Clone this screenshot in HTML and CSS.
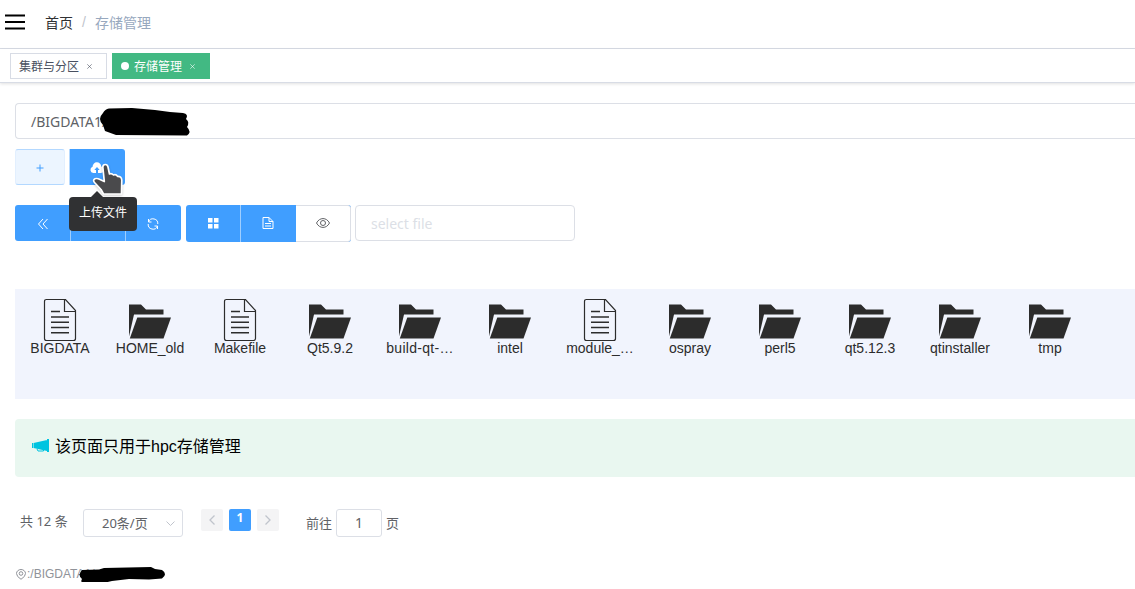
FILE: index.html
```html
<!DOCTYPE html>
<html lang="zh">
<head>
<meta charset="utf-8">
<title>存储管理</title>
<link rel="stylesheet" href="styles.css">
</head>
<body>
<svg class="defs" width="0" height="0">
  <symbol id="file" viewBox="0 0 34 44">
    <path d="M3.5 1.5H22.500L32.500 12.500V40.500Q32.500 42.500 30.500 42.500H3.500Q1.500 42.500 1.500 40.500V3.500Q1.500 1.500 3.500 1.500ZM21.500 1.500V13.500H32.500" fill="none" stroke="#2c2c2c" stroke-width="1.2"/>
    <path d="M8 13.500H17M8 19H26M8 24.300H26M8 29.500H26M8 34.800H26" stroke="#2c2c2c" stroke-width="1.500"/>
  </symbol>
  <symbol id="folder" viewBox="0 0 42 36">
    <path d="M0 1.500H12L17 6.500H34.500V11.500H5L0 33.500Z" fill="#2c2c2c"/>
    <path d="M8.300 14.500H42L34.500 35.500H.8Z" fill="#2c2c2c"/>
  </symbol>
</svg>
<header class="navbar">
  <svg class="burger" width="20" height="16" viewBox="0 0 20 16"><path d="M0 1.500H20M0 8H20M0 14.500H20" stroke="#000" stroke-width="2"/></svg>
  <span class="home">首页</span><span class="slash">/</span><span class="current">存储管理</span>
</header>
<nav class="tags">
  <span class="tag">集群与分区<svg class="close" viewBox="0 0 5 5"><path d="M.3.3 4.700 4.700M4.700.3.3 4.700"/></svg></span>
  <span class="tag active"><i class="dot"></i>存储管理<svg class="close" viewBox="0 0 5 5"><path d="M.3.3 4.700 4.700M4.700.3.3 4.700"/></svg></span>
</nav>
<main class="content">
  <div class="path-input"><span>/BIGDATA1/</span>
    <svg class="scribble" width="92" height="30" viewBox="0 0 92 30"><path d="M3 5Q5 1 9 .5L32 0 55 2 70 4 83 5Q89 6 86 11Q90 14 87 19Q92 24 87 27.500L16 27 5 23 3 17Q-3 11 3 5Z"/></svg>
  </div>
  <div class="actions">
    <button class="add"><svg width="8" height="8" viewBox="0 0 8 8"><path d="M4 .5V7.500M.5 4H7.500" stroke="#409eff"/></svg></button>
    <button class="upload">
      <svg width="14" height="12" viewBox="0 0 14 12"><path d="M3.300 11A3.200 3.200 0 0 1 2.600 4.800 4.300 4.300 0 0 1 11.200 4.500 3.300 3.300 0 0 1 10.700 11H8V8H9.700L7 5 4.300 8H6V11Z" fill="#fff"/></svg>
    </button>
    <svg class="pointer" width="32" height="34" viewBox="0 0 32 34"><path d="M10.800 4Q11 1.500 13.300 1.500 15.500 1.500 16 4L17.500 11Q19.500 10 21.500 12 24 11 25.500 13.300 29.500 13 29.800 17L29.500 31H11.500L9 26.500 2.500 19.500Q.5 17 3 15.800 5 15 8 16.500L12.300 18.500Z" fill="#4a4a4c" stroke="#fff" stroke-width="1.700" stroke-linejoin="round"/></svg>
    <div class="tooltip">上传文件</div>
  </div>
  <div class="toolbar">
    <div class="group nav-group">
      <span><svg width="12" height="12" viewBox="0 0 12 12" class="line"><path d="M6 1 1.500 6 6 11M10.500 1 6 6 10.500 11"/></svg></span>
      <span></span>
      <span><svg width="12" height="12" viewBox="0 0 12 12" class="line"><path d="M1.500 1V4H4.500M1.500 4A4.800 4.800 0 0 1 10.800 6M10.500 11V8H7.500M10.500 8A4.800 4.800 0 0 1 1.200 6"/></svg></span>
    </div>
    <div class="group view-group">
      <span><svg width="12" height="12" viewBox="0 0 12 12"><path d="M1 1h4.500v4.500h-4.500zM7 1h4.500v4.500h-4.500zM1 7h4.500v4.500h-4.500zM7 7h4.500v4.500h-4.500z" fill="#fff"/></svg></span>
      <span><svg width="12" height="12" viewBox="0 0 12 12" class="line"><path d="M1 .5H7L11 4.500V11.500H1ZM7 .5V4.500H11M3 6.500H9M3 9H9"/></svg></span>
      <span class="plain"><svg width="14" height="10" viewBox="0 0 14 10"><g fill="none" stroke="#606266"><path d="M.5 5C3.500-.9 10.500-.9 13.500 5 10.500 10.900 3.500 10.900.5 5Z"/><circle cx="7" cy="5" r="2.500"/></g></svg></span>
    </div>
    <div class="select-file">select file</div>
  </div>
  <section class="files">
    <div class="item"><svg class="doc"><use href="#file"/></svg><p>BIGDATA</p></div>
    <div class="item"><svg class="dir"><use href="#folder"/></svg><p>HOME_old</p></div>
    <div class="item"><svg class="doc"><use href="#file"/></svg><p>Makefile</p></div>
    <div class="item"><svg class="dir"><use href="#folder"/></svg><p>Qt5.9.2</p></div>
    <div class="item"><svg class="dir"><use href="#folder"/></svg><p class="wide">build-qt-…</p></div>
    <div class="item"><svg class="dir"><use href="#folder"/></svg><p>intel</p></div>
    <div class="item"><svg class="doc"><use href="#file"/></svg><p>module_…</p></div>
    <div class="item"><svg class="dir"><use href="#folder"/></svg><p>ospray</p></div>
    <div class="item"><svg class="dir"><use href="#folder"/></svg><p>perl5</p></div>
    <div class="item"><svg class="dir"><use href="#folder"/></svg><p>qt5.12.3</p></div>
    <div class="item"><svg class="dir"><use href="#folder"/></svg><p>qtinstaller</p></div>
    <div class="item"><svg class="dir"><use href="#folder"/></svg><p>tmp</p></div>
  </section>
  <section class="notice">
    <svg width="18" height="14" viewBox="0 0 18 14"><path d="M0 4H1V9H0ZM1.500 4 15 1V12L1.500 9ZM15 0H17V13H15Z" fill="#00c4e0"/><path d="M5 10 6 12H11.500V11" fill="none" stroke="#00c4e0"/></svg>
    <span>该页面只用于hpc存储管理</span>
  </section>
  <div class="pager">
    <span class="total">共 12 条</span>
    <span class="size"><span>20条/页</span><svg width="9" height="5" viewBox="0 0 9 5"><path d="M.5.5 4.500 4.500 8.500.5" fill="none" stroke="#c0c4cc"/></svg></span>
    <span class="page"><svg width="6" height="10" viewBox="0 0 6 10"><path d="M5.500.5 1 5 5.500 9.500"/></svg></span>
    <span class="page on">1</span>
    <span class="page"><svg width="6" height="10" viewBox="0 0 6 10"><path d="M.5.5 5 5 .5 9.500"/></svg></span>
    <span class="goto">前往</span><span class="num">1</span><span class="unit">页</span>
  </div>
  <footer class="location">
    <svg width="10" height="11" viewBox="0 0 10 11"><g fill="none" stroke="#909399"><path d="M5 10.300Q.5 7.500.5 4.500A4.500 4 0 0 1 9.500 4.500Q9.500 7.500 5 10.300Z"/><circle cx="5" cy="4.500" r="1.800"/></g></svg>
    <span>:/BIGDATA1/</span>
    <svg class="scribble" width="88" height="18" viewBox="0 0 88 18"><path d="M3 3 20 2.500 25 1 72 0 76 2 83 3Q89 7 83 11.500L70 12.500 50 12 33 14 20 17H5Q1 15 3 12-2 8 3 3Z"/></svg>
  </footer>
</main>
</body>
</html>
```
FILE: styles.css
```css
* { box-sizing: border-box; }
body {
  margin: 0;
  overflow: hidden;
  background: #fff;
  font-family: "Liberation Sans", "Noto Sans CJK SC", sans-serif;
  color: #606266;
}
svg { flex: none; }
.defs { display: block; }
p { margin: 0; }
button { border: 0; padding: 0; }

.navbar {
  display: flex;
  align-items: center;
  height: 49px;
  padding: 0 5px 5px;
  border-bottom: 1px solid #d8dce5;
  font-size: 14px;
}
.home { margin-left: 20px; color: #303133; }
.slash { margin: 0 9px; color: #c0c4cc; }
.current { color: #97a8be; }

.tags {
  display: flex;
  gap: 5px;
  height: 34px;
  padding: 4px 10px;
  border-bottom: 1px solid #d8dce5;
  box-shadow: 0 1px 3px rgba(0, 0, 0, .12);
}
.tag {
  display: flex;
  align-items: center;
  width: 97px;
  height: 26px;
  padding: 0 8px 2px;
  border: 1px solid #d8dce5;
  color: #495060;
  font-size: 12px;
  white-space: nowrap;
}
.tag.active { width: 98px; border-color: #42b983; background: #42b983; color: #fff; }
.dot { width: 8px; height: 8px; margin: 2px 5px 0 0; border-radius: 50%; background: #fff; }
.close { width: 5px; height: 5px; margin: 3px 0 0 8px; stroke: currentColor; stroke-width: .6; }

.content { display: flex; flex-direction: column; padding: 20px 0 0 15px; }
.path-input {
  position: relative;
  display: flex;
  align-items: center;
  height: 36px;
  padding: 0 15px;
  border: 1px solid #dcdfe6;
  border-right: 0;
  border-radius: 4px 0 0 4px;
  font: 14px "Noto Sans", sans-serif;
}
.path-input .scribble { position: absolute; left: 84px; top: 4px; overflow: visible; }

.actions { position: relative; display: flex; gap: 4px; height: 36px; margin-top: 10px; }
.actions button { display: flex; align-items: center; justify-content: center; height: 36px; }
.actions .add { width: 50px; padding-top: 1px; border: 1px solid #b3d8ff; border-color: #b3d8ff #e2effe; border-radius: 3px; background: #ecf5ff; }
.actions .upload { width: 56px; padding: 2px 1px 0 0; border-left: 1px solid #b3d8ff; border-radius: 0 3px 3px 0; background: #409eff; }
.pointer { position: absolute; left: 77px; top: 14px; z-index: 3; filter: drop-shadow(0 1px 1px rgba(0, 0, 0, .2)); }
.tooltip {
  position: absolute;
  left: 54px;
  top: 48px;
  z-index: 2;
  width: 68px;
  height: 34px;
  border-radius: 4px;
  background: #303133;
  color: #fff;
  font-size: 12px;
  line-height: 32px;
  text-align: center;
}
.tooltip::before {
  content: "";
  position: absolute;
  left: 22px;
  top: -6px;
  border: 6px solid transparent;
  border-top: 0;
  border-bottom-color: #303133;
}

.toolbar { display: flex; margin-top: 20px; }
.group { display: flex; overflow: hidden; border-radius: 3px; background: #409eff; }
.group span { display: flex; align-items: center; justify-content: center; width: 55px; }
.group span + span { border-left: 1px solid #9fceff; }
.nav-group { width: 166px; height: 36px; margin-right: 5px; }
.nav-group span { padding: 2px 0 0 1px; }
.nav-group span + span { padding-left: 0; }
.view-group { width: 165px; height: 37px; margin-right: 4px; }
.view-group span { padding-bottom: 1px; }
.view-group span:first-child { width: 54px; padding-right: 1px; }
.view-group span:nth-child(2) { width: 56px; padding-right: 1px; }
.group .plain { border: 1px solid #dcdfe6; border-left: 0; border-radius: 0 3px 3px 0; background: #fff; }
.group span.plain { border-left: 0; }
.line { fill: none; stroke: #fff; }
.select-file {
  width: 220px;
  height: 36px;
  padding-left: 15px;
  border: 1px solid #dcdfe6;
  border-radius: 4px;
  color: #dcdfe6;
  font: 14px/36px "Noto Sans", sans-serif;
}

.files { display: flex; height: 110px; margin-top: 47px; background: #f1f4fd; }
.item { flex: none; display: flex; flex-direction: column; align-items: center; width: 90px; padding-top: 9px; color: #2c2c2c; font-size: 14px; line-height: 16px; }
.doc { width: 34px; height: 44px; }
.dir { width: 42px; height: 36px; margin: 5px 0 3px; }
.item p { margin-top: -2px; white-space: nowrap; }
.item .wide { letter-spacing: .3px; }

.notice {
  display: flex;
  align-items: center;
  height: 58px;
  margin-top: 20px;
  padding: 0 17px 6px;
  border-radius: 4px 0 0 4px;
  background: #e9f7f0;
  color: #000;
  font-size: 16px;
}
.notice svg { margin-top: 1px; }
.notice span { margin-left: 5px; }

.pager { display: flex; align-items: center; height: 28px; margin-top: 32px; padding-left: 5px; font-size: 13px; white-space: nowrap; }
.total { width: 63px; padding-bottom: 6px; font-family: "Noto Sans", "Noto Sans CJK SC", sans-serif; }
.size {
  display: flex;
  align-items: center;
  justify-content: space-between;
  width: 100px;
  height: 28px;
  margin-right: 18px;
  padding: 0 7px 0 18px;
  border: 1px solid #dcdfe6;
  border-radius: 3px;
  font-family: "Noto Sans", "Noto Sans CJK SC", sans-serif;
}
.size span { padding-bottom: 2px; }
.page {
  display: flex;
  align-items: center;
  justify-content: center;
  width: 22px;
  height: 22px;
  margin: 0 6px 6px 0;
  border-radius: 2px;
  background: #f4f4f5;
}
.page svg { fill: none; stroke: #c0c4cc; stroke-width: 1.3; }
.page.on { padding-bottom: 5px; background: #409eff; color: #fff; font: bold 12px "Noto Sans", sans-serif; }
.goto { margin-left: 21px; }
.goto, .unit { padding-bottom: 2px; }
.num {
  width: 46px;
  height: 28px;
  margin: 0 4px;
  border: 1px solid #dcdfe6;
  border-radius: 3px;
  font: 14px/26px "Noto Sans", sans-serif;
  text-align: center;
}

.location { position: relative; display: flex; align-items: center; height: 16px; margin-top: 29px; padding-left: 1px; color: #909399; font-size: 12px; }
.location span { margin-left: 1px; }
.location .scribble { position: absolute; left: 64px; top: 1px; }
```
